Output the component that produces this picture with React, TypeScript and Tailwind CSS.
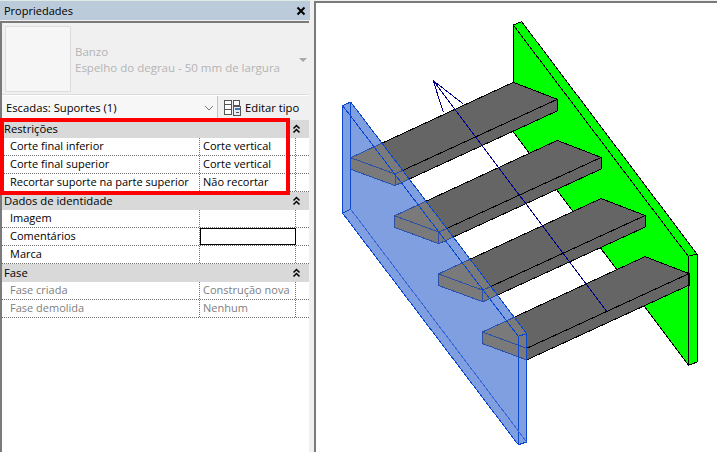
import React from "react";

const sections = [
  {
    title: "Restrições",
    rows: [
      { label: "Corte final inferior", value: "Corte vertical" },
      { label: "Corte final superior", value: "Corte vertical" },
      { label: "Recortar suporte na parte superior", value: "Não recortar" },
    ],
  },
  {
    title: "Dados de identidade",
    rows: [
      { label: "Imagem", value: "" },
      { label: "Comentários", value: "", active: true },
      { label: "Marca", value: "" },
    ],
  },
  {
    title: "Fase",
    rows: [
      { label: "Fase criada", value: "Construção nova", muted: true },
      { label: "Fase demolida", value: "Nenhum", muted: true },
    ],
  },
];

// tread corners for the first step, the others repeat with a fixed offset
const STEP_X = 43.9;
const STEP_Y = 58.1;
const THICK = 11.6;

const BLUE_OUTLINE = "342.7,105.7 350.7,102 526.7,333.7 526.7,442 518.3,444.7 342.7,213.3";

function pts(list: number[][], dx: number, dy: number) {
  return list.map(([x, y]) => `${x + dx},${y + dy}`).join(" ");
}

function Tread({ i, fill, stroke }: { i: number; fill: string; stroke: string }) {
  const dx = i * STEP_X;
  const dy = i * STEP_Y;
  const back = [513.3, 82.3];
  const right = [557.3, 99.3];
  const front = [395, 174];
  const left = [350.7, 157.7];
  const down = (p: number[]) => [p[0], p[1] + THICK];
  return (
    <g fill={fill} stroke={stroke} strokeWidth={1}>
      <polygon points={pts([back, right, front, left], dx, dy)} />
      <polygon points={pts([front, right, down(right), down(front)], dx, dy)} />
      <polygon points={pts([left, front, down(front), down(left)], dx, dy)} />
    </g>
  );
}

function CollapseIcon() {
  return (
    <svg width="9" height="10" viewBox="0 0 9 10" fill="none" stroke="#000" strokeWidth="1.5">
      <path d="M1.5 4.5 L4.5 1.5 L7.5 4.5" />
      <path d="M1.5 8.5 L4.5 5.5 L7.5 8.5" />
    </svg>
  );
}

function EditTypeIcon() {
  return (
    <svg width="17" height="16" viewBox="0 0 17 16" fill="none" stroke="#555" strokeWidth="1" shapeRendering="crispEdges">
      <rect x="0.5" y="0.5" width="7" height="14" fill="#fff" />
      <path d="M0.5 4.5 H7.5 M0.5 9.5 H7.5" />
      <rect x="9.5" y="0.5" width="6" height="5" fill="#fff" />
      <rect x="9.5" y="6.5" width="7" height="9" fill="#e8eef6" />
      <rect x="10.5" y="7.5" width="5" height="2" fill="#3f78b8" stroke="none" />
      <path d="M11.5 12.5 H14.5" />
    </svg>
  );
}

function StairDrawing() {
  const treads = [0, 1, 2, 3];
  return (
    <svg className="block w-full h-full" viewBox="316 3 401 449" shapeRendering="crispEdges">
      <defs>
        <clipPath id="blue-clip">
          <polygon points={BLUE_OUTLINE} />
        </clipPath>
      </defs>

      {/* green stringer */}
      <polygon
        points="513.3,25 521.7,21.7 697,254 697,362 688.7,365.3 513.3,132"
        fill="#00ff00"
        stroke="#000"
      />
      <path d="M513.3 25 L688.3 256.3 L697 254 M688.3 256.3 V365.3" fill="none" stroke="#000" />

      {treads.map((i) => (
        <Tread key={i} i={i} fill="#656565" stroke="#000" />
      ))}
      <path d="M688.3 256.3 V365.3" fill="none" stroke="#000" />

      {/* blue stringer, see through */}
      <polygon points={BLUE_OUTLINE} fill="#7f9fe0" />
      <g clipPath="url(#blue-clip)">
        {treads.map((i) => (
          <Tread key={i} i={i} fill="#7a7a7a" stroke="#2c50a8" />
        ))}
      </g>
      <g fill="none" stroke="#0a48d0">
        <polygon points={BLUE_OUTLINE} />
        <path d="M342.7 105.7 L518.3 336.3 L526.7 333.7" />
        <path d="M518.3 336.3 V444.7" />
        <path d="M350.7 102 V209.3 L342.7 213.3" />
      </g>
      <path d="M350.7 209.3 L526.7 442" fill="none" stroke="#3a68d8" />

      {/* walk line */}
      <g fill="none" stroke="#00008b">
        <path d="M433.3 80.7 L606.7 311.3" />
        <path d="M433.3 80.7 L443.3 112.3" />
        <path d="M433.3 80.7 L463.3 104" />
      </g>
    </svg>
  );
}

export default function App() {
  return (
    <div
      className="flex w-[717px] h-[452px] overflow-hidden relative bg-[#f0f0f0] text-[11.25px] leading-[18px] text-black"
      style={{ fontFamily: '"Open Sans", "Noto Sans", sans-serif' }}
    >
      {/* Properties palette */}
      <div className="w-[314px] shrink-0 flex flex-col">
        <div className="h-px w-[310px] bg-[#dfe9e6]" />
        <div className="h-[19px] w-[310px] bg-[#bccbd9] flex items-center justify-between pl-[4px] pr-[4px]">
          <span className="text-[11px]">Propriedades</span>
          <svg width="10" height="10" viewBox="0 0 10 10" stroke="#000" strokeWidth="2">
            <path d="M1.5 1.5 L8.5 8.5 M8.5 1.5 L1.5 8.5" />
          </svg>
        </div>
        <div className="h-px w-[310px] bg-[#f0f0f0]" />

        <div className="w-[309px] flex-1 flex flex-col border-t-2 border-l-2 border-[#7a7a7a] bg-white">
          {/* type preview */}
          <div className="h-[72px] flex items-center bg-[#f0f0f0] border-b border-[#dcdcdc]">
            <div className="w-[66px] h-[66px] ml-[3px] bg-[#f6f6f6] border border-[#dddddd]" />
            <div className="ml-[4px] mt-[3px] flex-1 text-[11.5px] leading-[16px] text-[#b4b4b4]">
              <div>Banzo</div>
              <div>Espelho do degrau - 50 mm de largura</div>
            </div>
            <div className="mr-[2px] mt-[2px] w-0 h-0 border-x-[4px] border-t-[4px] border-x-transparent border-t-[#a8a8a8]" />
          </div>

          {/* selection filter */}
          <div className="h-[24px] flex items-center bg-[#f0f0f0] mt-px">
            <div className="w-[216px] h-full flex items-center justify-between pl-[4px] pr-[3px] bg-[#f7f7f7] border-r border-[#c4c4c4]">
              <span>Escadas: Suportes (1)</span>
              <svg width="10" height="6" viewBox="0 0 10 6" fill="none" stroke="#777" strokeWidth="1">
                <path d="M1 1 L5 5 L9 1" />
              </svg>
            </div>
            <div className="flex items-center ml-[6px] gap-[4px]">
              <EditTypeIcon />
              <span>Editar tipo</span>
            </div>
          </div>

          {/* property grid */}
          {sections.map((section) => (
            <div key={section.title}>
              <div className="h-[18px] flex items-center justify-between bg-[#d9d9d9] pl-[2px] pr-[8px]">
                <span>{section.title}</span>
                <CollapseIcon />
              </div>
              {section.rows.map((row) => (
                <div
                  key={row.label}
                  className={`h-[18px] text-[11px] leading-[16px] grid grid-cols-[198px_96px_1fr] border-b border-dotted border-[#707070] ${
                    row.muted ? "text-[#808080]" : ""
                  }`}
                >
                  <div className="pl-[8px] border-r border-dotted border-[#707070] whitespace-nowrap">{row.label}</div>
                  <div
                    className={`pl-[3px] whitespace-nowrap border-r ${
                      row.active ? "border border-black" : "border-dotted border-[#707070]"
                    }`}
                  >
                    {row.value}
                  </div>
                  <div />
                </div>
              ))}
            </div>
          ))}
        </div>
      </div>

      {/* 3D view */}
      <div className="flex-1 border-l-2 border-t-2 border-[#7a7a7a] mt-px bg-white">
        <StairDrawing />
      </div>

      {/* highlight drawn over the palette */}
      <div className="absolute left-0 top-[118px] w-[290px] h-[77px] border-4 border-[#ff0000]" />
    </div>
  );
}
